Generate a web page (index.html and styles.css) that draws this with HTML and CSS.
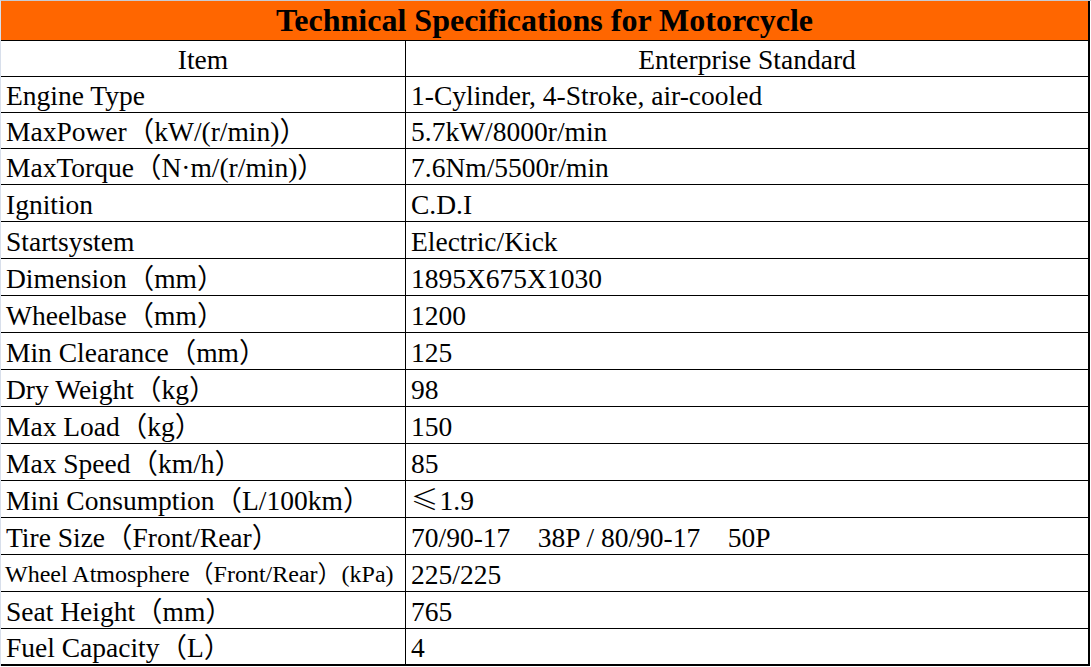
FILE: index.html
```html
<!DOCTYPE html>
<html>
<head>
<meta charset="utf-8">
<title>Technical Specifications for Motorcycle</title>
<link rel="stylesheet" href="styles.css">
</head>
<body>
<div class="frame">
<table class="spec">
  <colgroup><col class="col-k"><col class="col-v"></colgroup>
  <tr class="r-title"><td class="title" colspan="2">Technical Specifications for Motorcycle</td></tr>
  <tr class="r36"><td class="k center">Item</td><td class="v center">Enterprise Standard</td></tr>
  <tr class="r36"><td class="k">Engine Type</td><td class="v">1-Cylinder, 4-Stroke, air-cooled</td></tr>
  <tr class="r36"><td class="k">MaxPower（kW/(r/min)）</td><td class="v">5.7kW/8000r/min</td></tr>
  <tr class="r36"><td class="k">MaxTorque（N·m/(r/min)）</td><td class="v">7.6Nm/5500r/min</td></tr>
  <tr class="r37"><td class="k">Ignition</td><td class="v">C.D.I</td></tr>
  <tr class="r37"><td class="k">Startsystem</td><td class="v">Electric/Kick</td></tr>
  <tr class="r37"><td class="k">Dimension（mm）</td><td class="v">1895X675X1030</td></tr>
  <tr class="r37"><td class="k">Wheelbase（mm）</td><td class="v">1200</td></tr>
  <tr class="r37"><td class="k">Min Clearance（mm）</td><td class="v">125</td></tr>
  <tr class="r37"><td class="k">Dry Weight（kg）</td><td class="v">98</td></tr>
  <tr class="r37"><td class="k">Max Load（kg）</td><td class="v">150</td></tr>
  <tr class="r37"><td class="k">Max Speed（km/h）</td><td class="v">85</td></tr>
  <tr class="r37"><td class="k">Mini Consumption（L/100km）</td><td class="v"><span class="le">≤</span>1.9</td></tr>
  <tr class="r37"><td class="k">Tire Size（Front/Rear）</td><td class="v pre">70/90-17    38P / 80/90-17    50P</td></tr>
  <tr class="r37"><td class="k small">Wheel Atmosphere（Front/Rear）(kPa)</td><td class="v">225/225</td></tr>
  <tr class="r37"><td class="k">Seat Height（mm）</td><td class="v">765</td></tr>
  <tr class="r37 last"><td class="k">Fuel Capacity（L）</td><td class="v">4</td></tr>
</table>
</div>
</body>
</html>
```
FILE: styles.css
```css
html, body {
  margin: 0;
  padding: 0;
  background: #ffffff;
}

.frame {
  width: 1090px;
  border-top: 1px solid #c7cbd3;
  border-left: 1px solid #d8dfeb;
}

.spec {
  width: 1089px;
  border-collapse: separate;
  border-spacing: 0;
  table-layout: fixed;
  font-family: "Liberation Serif", "Noto Sans CJK SC", serif;
  color: #000;
}

.col-k { width: 405px; }
.col-v { width: 684px; }

.spec td {
  box-sizing: border-box;
  padding: 0 5px 1px;
  font-size: 27.5px;
  line-height: 31px;
  vertical-align: bottom;
  white-space: nowrap;
  border-bottom: 1px solid #000;
}

.spec .k {
  border-right: 1px solid #000;
}

.spec .v {
  border-right: 2px solid #000;
}

.spec .center {
  text-align: center;
}

.spec .pre {
  white-space: pre;
}

.spec .small {
  font-size: 24px;
  padding-left: 4px;
  padding-right: 0;
}

.le {
  font-family: "Noto Sans CJK SC", "Liberation Serif", sans-serif;
  font-weight: 300;
  line-height: 1;
  margin-right: 1px;
}

.r-title { height: 40px; }
.r36 { height: 36px; }
.r37 { height: 37px; }

.spec .title {
  background: #ff6600;
  text-align: center;
  font-weight: bold;
  font-size: 32px;
  line-height: 37px;
  vertical-align: middle;
  border-right: 2px solid #000;
  padding: 0;
}

.last td {
  border-bottom: 2px solid #000;
}
```
